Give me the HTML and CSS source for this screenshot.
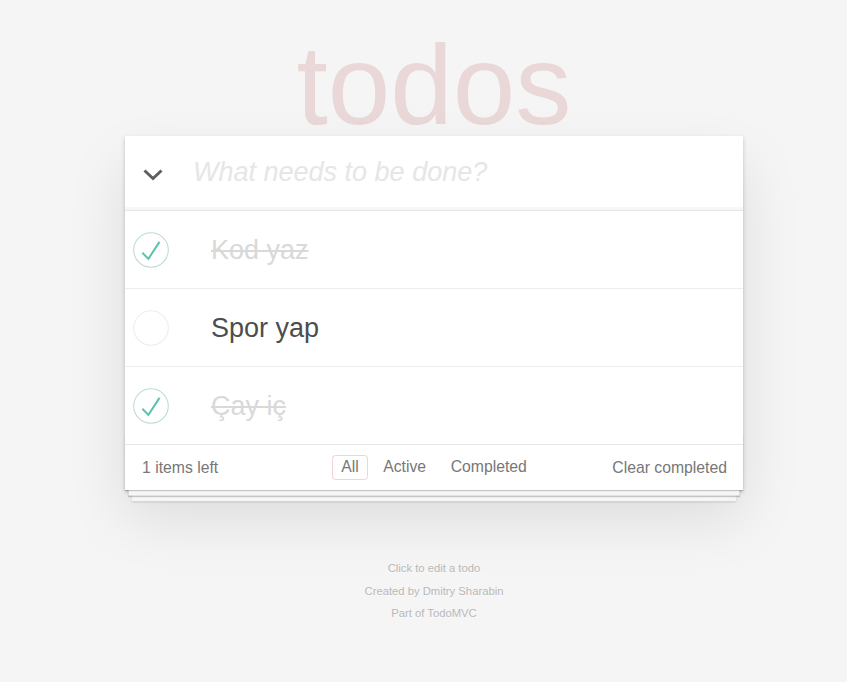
FILE: index.html
```html
<!DOCTYPE html>
<html lang="tr">
<head>
<meta charset="utf-8">
<title>todos</title>
<link rel="stylesheet" href="styles.css">
</head>
<body>
<section class="page">
  <h1 class="title">todos</h1>
  <div class="card">
    <header class="header">
      <span class="toggle-all">
        <svg width="20" height="12" viewBox="0 0 20 12"><polyline points="1.5,1.5 10,9.5 18.5,1.5" fill="none" stroke="#5f5f5f" stroke-width="3"/></svg>
      </span>
      <input class="new-todo" placeholder="What needs to be done?">
    </header>
    <ul class="todo-list">
      <li class="todo completed">
        <svg class="toggle" width="36" height="36" viewBox="-2 -2 104 104"><circle cx="50" cy="50" r="50" fill="none" stroke="#bddad5" stroke-width="3"/><path fill="#5dc2af" d="M72 25L42 71 27 56l-4 4 20 20 34-52z"/></svg>
        <label class="label">Kod yaz</label>
      </li>
      <li class="todo">
        <svg class="toggle" width="36" height="36" viewBox="-2 -2 104 104"><circle cx="50" cy="50" r="50" fill="none" stroke="#ededed" stroke-width="3"/></svg>
        <label class="label">Spor yap</label>
      </li>
      <li class="todo completed">
        <svg class="toggle" width="36" height="36" viewBox="-2 -2 104 104"><circle cx="50" cy="50" r="50" fill="none" stroke="#bddad5" stroke-width="3"/><path fill="#5dc2af" d="M72 25L42 71 27 56l-4 4 20 20 34-52z"/></svg>
        <label class="label">Çay iç</label>
      </li>
    </ul>
    <footer class="footer">
      <span class="todo-count">1 items left</span>
      <ul class="filters">
        <li><a class="filter selected" href="#/">All</a></li>
        <li><a class="filter" href="#/active">Active</a></li>
        <li><a class="filter" href="#/completed">Completed</a></li>
      </ul>
      <button class="clear-completed">Clear completed</button>
    </footer>
  </div>
  <footer class="info">
    <p>Click to edit a todo</p>
    <p>Created by <a class="info-link" href="#">Dmitry Sharabin</a></p>
    <p>Part of <a class="info-link" href="#">TodoMVC</a></p>
  </footer>
</section>
</body>
</html>
```
FILE: styles.css
```css
* { box-sizing: border-box; }
html, body { margin: 0; padding: 0; }
body {
  background: #f5f5f5;
  font-family: "Liberation Sans", Arial, Helvetica, sans-serif;
  color: #4d4d4d;
  font-size: 15.75px;
  line-height: 22px;
}
.page { width: 618px; margin-left: 125px; }
.title {
  margin: 34px 0 0;
  height: 102px;
  line-height: 102px;
  font-size: 112.5px;
  font-weight: 400;
  text-align: center;
  color: rgba(175, 47, 47, 0.15);
}
.card {
  position: relative;
  background: #fff;
  box-shadow: 0 2px 4px 0 rgba(0,0,0,0.2), 0 28px 56px 0 rgba(0,0,0,0.1);
}
.header {
  display: flex;
  align-items: center;
  height: 75px;
  border-bottom: 1px solid #e6e6e6;
  box-shadow: inset 0 -3px 1px rgba(0,0,0,0.03);
}
.toggle-all {
  flex: none;
  width: 68px;
  display: flex;
  align-items: center;
  padding-left: 18px;
  padding-top: 4px;
}
.new-todo {
  flex: 1;
  height: 100%;
  border: 0;
  outline: 0;
  background: transparent;
  font-family: inherit;
  font-size: 27px;
  color: #4d4d4d;
  padding: 0 18px 1px 0;
}
.new-todo::placeholder { font-style: italic; color: #e6e6e6; }
.todo-list { list-style: none; margin: 0; padding: 0; }
.todo {
  display: flex;
  align-items: center;
  height: 78px;
  border-bottom: 1px solid #ededed;
}
.todo:last-child { border-bottom: 0; height: 77px; }
.toggle { flex: none; margin-left: 8px; }
.label {
  font-size: 27px;
  line-height: 32.4px;
  padding: 1px 0 0 42px;
  color: #4d4d4d;
}
.completed .label { color: #d9d9d9; text-decoration: line-through; }
.footer {
  position: relative;
  display: grid;
  grid-template-columns: 1fr auto 1fr;
  align-items: center;
  height: 46px;
  padding: 0 17px 0 17px;
  border-top: 1px solid #e6e6e6;
  color: #777;
  font-size: 15.75px;
}
.footer::before {
  content: '';
  position: absolute;
  left: 0;
  right: 0;
  bottom: 0;
  height: 56px;
  overflow: hidden;
  pointer-events: none;
  box-shadow: 0 1px 1px rgba(0,0,0,0.2),
              0 9px 0 -3.4px #f6f6f6,
              0 10px 1px -3.4px rgba(0,0,0,0.2),
              0 18px 0 -6.75px #f6f6f6,
              0 19px 2px -6.75px rgba(0,0,0,0.2);
}
.todo-count { justify-self: start; }
.filters {
  display: flex;
  list-style: none;
  margin: 0;
  padding: 0;
}
.filter {
  display: block;
  margin: 0 3.4px;
  padding: 3.4px 7.9px;
  border: 1.1px solid transparent;
  border-radius: 3.4px;
  color: inherit;
  text-decoration: none;
  line-height: 16.5px;
}
.filter.selected { border-color: rgba(175,47,47,0.2); }
.clear-completed {
  justify-self: end;
  background: none;
  border: 0;
  padding: 0;
  margin-right: -1px;
  font: inherit;
  color: inherit;
}
.info {
  padding-top: 73px;
  text-align: center;
  font-size: 11.25px;
  line-height: 11.25px;
  color: #b8b8b8;
  text-shadow: 0 1px 0 rgba(255,255,255,0.5);
}
.info p { margin: 0 0 11.25px; }
.info-link { color: inherit; text-decoration: none; }
```
